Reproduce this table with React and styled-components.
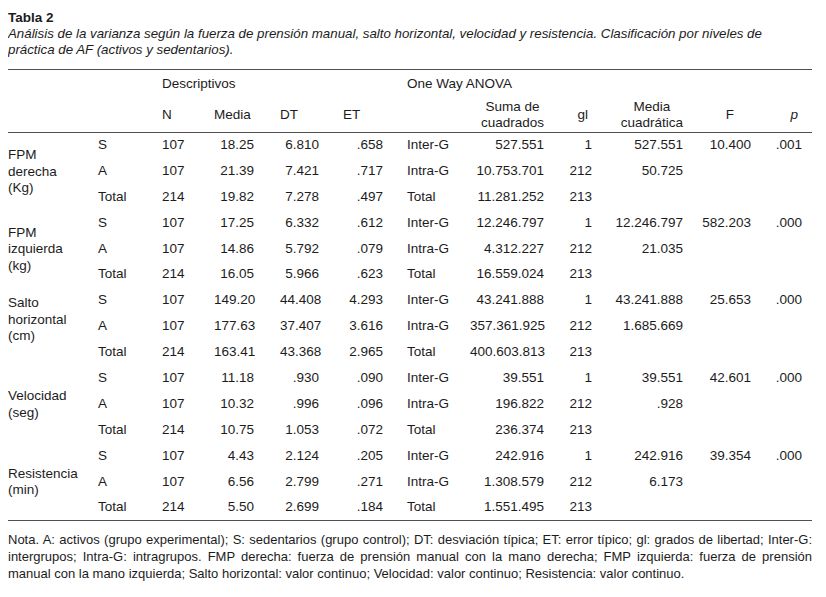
import React from "react";
import styled, { createGlobalStyle } from "styled-components";

const GlobalStyle = createGlobalStyle`
  body {
    margin: 8px;
    background: #ffffff;
    font-family: "Liberation Sans", Arial, sans-serif;
    color: #1c1c1c;
  }
`;

const Page = styled.div`
  width: 804px;
`;

const Caption = styled.div`
  font-size: 13.5px;
  line-height: 16px;
  padding-top: 2px;
  margin-bottom: 11px;
`;

const Title = styled.div`
  font-weight: 700;
`;

const Subtitle = styled.div`
  font-style: italic;
  font-size: 13.3px;
`;

const Table = styled.table`
  width: 804px;
  table-layout: fixed;
  border-collapse: collapse;
  font-size: 13.5px;
  border-top: 1px solid #505050;
  border-bottom: 1px solid #505050;
`;

const HeadRow = styled.tr`
  height: ${(p) => p.$h}px;
  ${(p) => (p.$rule ? "border-bottom: 1px solid #505050;" : "")}
`;

const Th = styled.th`
  font-weight: 400;
  padding: 0 ${(p) => p.$pr || 0}px 0 0;
  text-align: ${(p) => p.$align || "left"};
  vertical-align: middle;
  line-height: 16.5px;
  font-style: ${(p) => (p.$italic ? "italic" : "normal")};
  white-space: nowrap;
`;

const Stack = styled.span`
  display: inline-block;
  text-align: center;
`;

const BodyRow = styled.tr`
  height: 25.9px;
`;

const Td = styled.td`
  padding: 0 ${(p) => p.$pr || 0}px 0 0;
  text-align: ${(p) => p.$align || "left"};
  vertical-align: middle;
  line-height: 16px;
  white-space: nowrap;
`;

const GroupCell = styled.td`
  padding: ${(p) => (p.$top ? "8px 0 0 0" : "2px 0 0 0")};
  vertical-align: ${(p) => (p.$top ? "top" : "middle")};
  line-height: 16.5px;
  text-align: left;
`;

const Note = styled.p`
  margin: 10px 0 0 0;
  font-size: 13px;
  line-height: 17px;
  text-align: justify;
`;

const widths = [90, 64, 52, 66, 63, 64, 63, 90, 40, 100, 65, 47];

// body columns after the group label
const cols = [
  { align: "left", pr: 0 },
  { align: "left", pr: 0 },
  { align: "right", pr: 26 },
  { align: "right", pr: 24 },
  { align: "right", pr: 24 },
  { align: "left", pr: 0 },
  { align: "right", pr: 16 },
  { align: "right", pr: 8 },
  { align: "right", pr: 17 },
  { align: "right", pr: 14 },
  { align: "right", pr: 10 },
];

const groups = [
  {
    label: ["FPM", "derecha", "(Kg)"],
    rows: [
      ["S", "107", "18.25", "6.810", ".658", "Inter-G", "527.551", "1", "527.551", "10.400", ".001"],
      ["A", "107", "21.39", "7.421", ".717", "Intra-G", "10.753.701", "212", "50.725", "", ""],
      ["Total", "214", "19.82", "7.278", ".497", "Total", "11.281.252", "213", "", "", ""],
    ],
  },
  {
    label: ["FPM", "izquierda", "(kg)"],
    rows: [
      ["S", "107", "17.25", "6.332", ".612", "Inter-G", "12.246.797", "1", "12.246.797", "582.203", ".000"],
      ["A", "107", "14.86", "5.792", ".079", "Intra-G", "4.312.227", "212", "21.035", "", ""],
      ["Total", "214", "16.05", "5.966", ".623", "Total", "16.559.024", "213", "", "", ""],
    ],
  },
  {
    label: ["Salto", "horizontal", "(cm)"],
    top: true,
    rows: [
      ["S", "107", "149.20", "44.408", "4.293", "Inter-G", "43.241.888", "1", "43.241.888", "25.653", ".000"],
      ["A", "107", "177.63", "37.407", "3.616", "Intra-G", "357.361.925", "212", "1.685.669", "", ""],
      ["Total", "214", "163.41", "43.368", "2.965", "Total", "400.603.813", "213", "", "", ""],
    ],
  },
  {
    label: ["Velocidad", "(seg)"],
    rows: [
      ["S", "107", "11.18", ".930", ".090", "Inter-G", "39.551", "1", "39.551", "42.601", ".000"],
      ["A", "107", "10.32", ".996", ".096", "Intra-G", "196.822", "212", ".928", "", ""],
      ["Total", "214", "10.75", "1.053", ".072", "Total", "236.374", "213", "", "", ""],
    ],
  },
  {
    label: ["Resistencia", "(min)"],
    rows: [
      ["S", "107", "4.43", "2.124", ".205", "Inter-G", "242.916", "1", "242.916", "39.354", ".000"],
      ["A", "107", "6.56", "2.799", ".271", "Intra-G", "1.308.579", "212", "6.173", "", ""],
      ["Total", "214", "5.50", "2.699", ".184", "Total", "1.551.495", "213", "", "", ""],
    ],
  },
];

export default function App() {
  return (
    <Page>
      <GlobalStyle />
      <Caption>
        <Title>Tabla 2</Title>
        <Subtitle>
          Análisis de la varianza según la fuerza de prensión manual, salto horizontal, velocidad y resistencia. Clasificación por niveles de práctica de AF (activos y sedentarios).
        </Subtitle>
      </Caption>
      <Table>
        <colgroup>
          {widths.map((w, i) => (
            <col key={i} style={{ width: w }} />
          ))}
        </colgroup>
        <thead>
          <HeadRow $h={29}>
            <Th />
            <Th />
            <Th colSpan={4}>Descriptivos</Th>
            <Th colSpan={6}>One Way ANOVA</Th>
          </HeadRow>
          <HeadRow $h={32} $rule>
            <Th />
            <Th />
            <Th>N</Th>
            <Th>Media</Th>
            <Th>DT</Th>
            <Th>ET</Th>
            <Th />
            <Th $align="right" $pr={16}>
              <Stack>
                Suma de
                <br />
                cuadrados
              </Stack>
            </Th>
            <Th $align="right" $pr={12}>gl</Th>
            <Th $align="right" $pr={17}>
              <Stack>
                Media
                <br />
                cuadrática
              </Stack>
            </Th>
            <Th $align="right" $pr={31}>F</Th>
            <Th $align="right" $pr={14} $italic>p</Th>
          </HeadRow>
        </thead>
        <tbody>
          {groups.map((g, gi) =>
            g.rows.map((r, ri) => (
              <BodyRow key={`${gi}-${ri}`}>
                {ri === 0 && (
                  <GroupCell rowSpan={3} $top={g.top}>
                    {g.label.map((l, li) => (
                      <React.Fragment key={li}>
                        {li > 0 && <br />}
                        {l}
                      </React.Fragment>
                    ))}
                  </GroupCell>
                )}
                {r.map((v, ci) => (
                  <Td key={ci} $align={cols[ci].align} $pr={cols[ci].pr}>
                    {v}
                  </Td>
                ))}
              </BodyRow>
            ))
          )}
        </tbody>
      </Table>
      <Note>
        Nota. A: activos (grupo experimental); S: sedentarios (grupo control); DT: desviación típica; ET: error típico; gl: grados de libertad; Inter-G: intergrupos; Intra-G: intragrupos. FMP derecha: fuerza de prensión manual con la mano derecha; FMP izquierda: fuerza de prensión manual con la mano izquierda; Salto horizontal: valor continuo; Velocidad: valor continuo; Resistencia: valor continuo.
      </Note>
    </Page>
  );
}
